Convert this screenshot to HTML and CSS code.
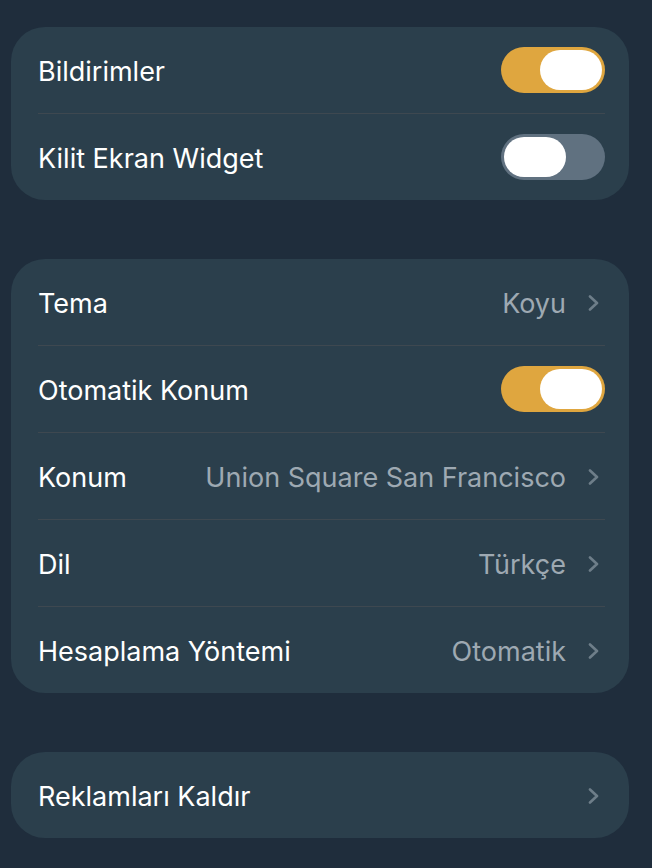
FILE: index.html
```html
<!DOCTYPE html>
<html lang="tr">
<head>
  <meta charset="UTF-8" />
  <meta name="viewport" content="width=device-width, initial-scale=1.0" />
  <title>Ayarlar</title>
  <link rel="stylesheet" href="styles.css">
</head>
<body>

<main class="settings">

  <section class="group">
    <div class="row">
      <span class="label">Bildirimler</span>
      <span class="toggle on"><span class="knob"></span></span>
    </div>
    <div class="row">
      <span class="label">Kilit Ekran Widget</span>
      <span class="toggle"><span class="knob"></span></span>
    </div>
  </section>

  <section class="group">
    <div class="row">
      <span class="label">Tema</span>
      <span class="value">Koyu</span>
      <svg class="chevron" viewBox="0 0 12 16"><path d="M2 1.5 L9 8 L2 14.5" /></svg>
    </div>
    <div class="row">
      <span class="label">Otomatik Konum</span>
      <span class="toggle on"><span class="knob"></span></span>
    </div>
    <div class="row">
      <span class="label">Konum</span>
      <span class="value">Union Square San Francisco</span>
      <svg class="chevron" viewBox="0 0 12 16"><path d="M2 1.5 L9 8 L2 14.5" /></svg>
    </div>
    <div class="row">
      <span class="label">Dil</span>
      <span class="value">Türkçe</span>
      <svg class="chevron" viewBox="0 0 12 16"><path d="M2 1.5 L9 8 L2 14.5" /></svg>
    </div>
    <div class="row">
      <span class="label">Hesaplama Yöntemi</span>
      <span class="value">Otomatik</span>
      <svg class="chevron" viewBox="0 0 12 16"><path d="M2 1.5 L9 8 L2 14.5" /></svg>
    </div>
  </section>

  <section class="group">
    <div class="row">
      <span class="label">Reklamları Kaldır</span>
      <span class="value"></span>
      <svg class="chevron" viewBox="0 0 12 16"><path d="M2 1.5 L9 8 L2 14.5" /></svg>
    </div>
  </section>

</main>

</body>
</html>
```

FILE: styles.css
```css
:root {
  --bg: #1f2d3c;
  --card: #2b3f4c;
  --divider: #3e4850;
  --text: #ffffff;
  --muted: #9ea9b2;
  --chevron: #6e7e89;
  --accent: #dfa63f;
  --off: #607180;
}

* {
  margin: 0;
  padding: 0;
  box-sizing: border-box;
}

body {
  background: var(--bg);
  font-family: Inter, "Noto Sans", sans-serif;
  color: var(--text);
}

.settings {
  display: flex;
  flex-direction: column;
  gap: 59px;
  padding: 27px 23px 30px 11px;
}

.group {
  background: var(--card);
  border-radius: 34px;
  padding: 0 24px 0 27px;
}

.row {
  display: flex;
  align-items: center;
  height: 87px;
  padding-top: 2px;
  border-top: 1px solid var(--divider);
}

.row:first-child {
  border-top: none;
  height: 86px;
}

.label {
  font-size: 27px;
  white-space: nowrap;
}

.value {
  flex: 1;
  text-align: right;
  font-size: 27px;
  color: var(--muted);
  margin-right: 22px;
  white-space: nowrap;
}

.chevron {
  width: 12px;
  height: 16px;
  margin-right: 5px;
  fill: none;
  stroke: var(--chevron);
  stroke-width: 2.6;
  stroke-linecap: round;
  stroke-linejoin: round;
}

.toggle {
  margin-left: auto;
  margin-top: -2px;
  width: 104px;
  height: 46px;
  border-radius: 23px;
  background: var(--off);
  padding: 3px;
  display: flex;
}

.toggle .knob {
  width: 62px;
  height: 40px;
  border-radius: 20px;
  background: #ffffff;
}

.toggle.on {
  background: var(--accent);
  justify-content: flex-end;
}
```
